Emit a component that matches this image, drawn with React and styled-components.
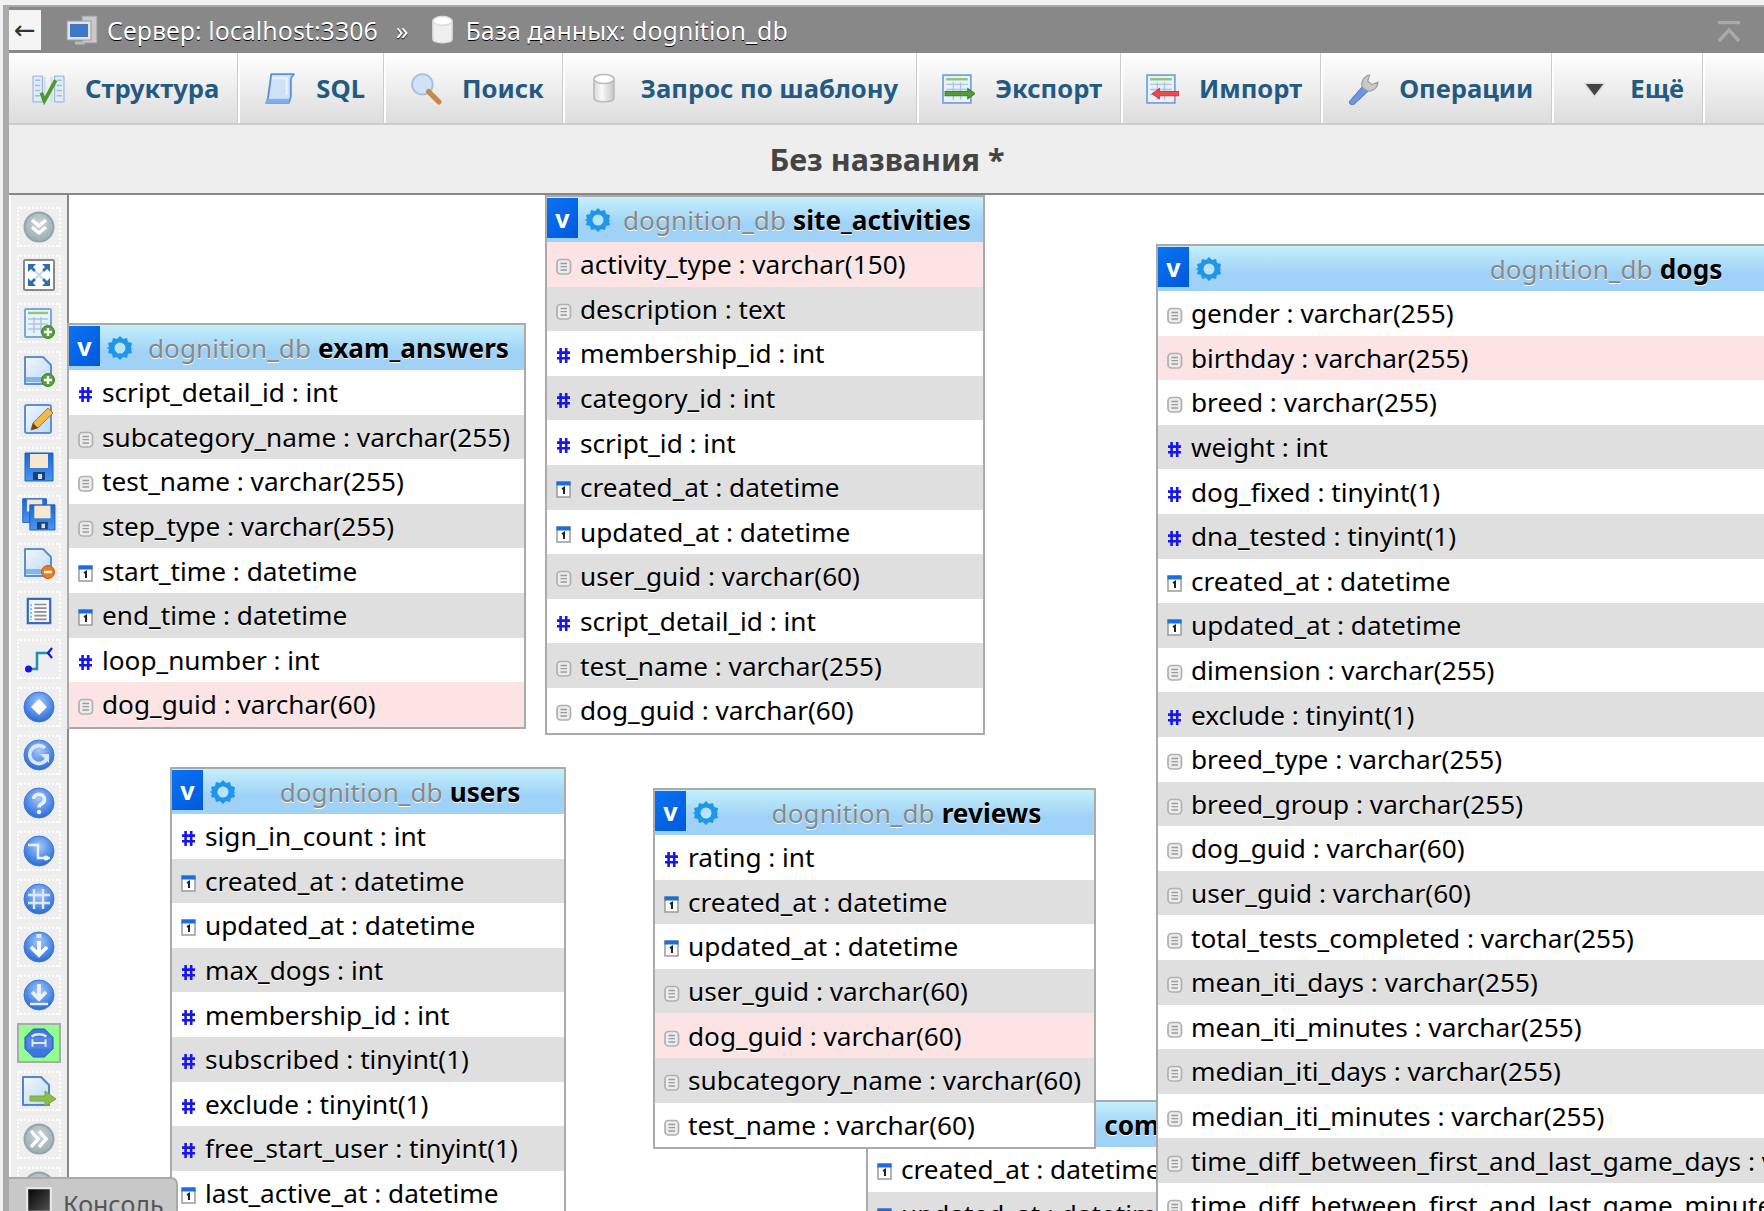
import React from "react";
import styled, { createGlobalStyle } from "styled-components";

const GlobalStyle = createGlobalStyle`
  html, body { margin: 0; padding: 0; height: 100%; overflow: hidden; background: #f1f2f4; }
  body { font-family: "Noto Sans", "Open Sans", sans-serif; }
  #root { height: 100%; }
`;

const Page = styled.div`
  position: relative; width: 1764px; height: 1211px; padding: 5px 0 0 3px;
  box-sizing: border-box; overflow: hidden;
`;
const Frame = styled.div`
  display: flex; flex-direction: column; height: 100%; position: relative;
  border-top: 2px solid #aaa; border-left: 6px solid #aaa; box-sizing: border-box; background: #fff;
`;
const Header = styled.header`
  display: flex; align-items: center; height: 46px; flex: none; background: #888; color: #fff;
  font-size: 25px; text-shadow: 0 1px 0 #000;
`;
const BackButton = styled.div`
  display: flex; align-items: center; justify-content: center; width: 32px; height: 40px;
  margin-right: 25px; background: #f5f5f5; color: #333; font-size: 26px; text-shadow: none; font-family: "DejaVu Sans", sans-serif;
`;
const Crumb = styled.span`
  display: flex; align-items: center; gap: ${p => p.$gap || 9}px; white-space: nowrap; margin-right: ${p => p.$after || 0}px;
`;
const CollapseButton = styled.div`
  margin-left: auto; margin-right: 23px; margin-top: 2px; display: flex;
`;
const TabBar = styled.nav`
  display: flex; height: 72px; flex: none; box-sizing: border-box;
  background: linear-gradient(#fff, #dcdcdc); border-bottom: 2px solid #ccc;
`;
const Tab = styled.a`
  display: flex; align-items: center; gap: 20px; padding: 0 19px 0 23px; color: #235a81;
  font-size: 25.6px; font-weight: 700; border-right: 2px solid; border-color: #fff; box-shadow: inset -1px 0 0 #ccc; white-space: nowrap;
`;
const TabIcon = styled.span`
  display: flex; width: 33px; justify-content: center;
`;
const TitleBand = styled.div`
  display: flex; align-items: center; justify-content: center; flex: none; height: 70px; box-sizing: border-box;
  background: #eee; border-bottom: 2px solid #888; color: #444; font-size: 30.5px; font-weight: 700; padding-left: 1px;
`;
const Workspace = styled.div`
  display: flex; flex: 1; min-height: 0;
`;
const Toolbar = styled.aside`
  display: flex; flex-direction: column; gap: 8px; flex: none; width: 60px; box-sizing: border-box;
  padding: 12px 0 0 8px; background: linear-gradient(90deg, #fff 2px, #eee 2px); border-right: 2px solid #888; overflow: hidden;
`;
const ToolButton = styled.div`
  display: flex; align-items: center; justify-content: center; flex: none; width: 44px; height: 40px; box-sizing: border-box;
  border: 2px ${p => (p.$active ? "solid #aaa" : "dotted #fff")}; background: ${p => (p.$active ? "#90ff90" : "transparent")};
`;
const Canvas = styled.main`
  position: relative; flex: 1; min-width: 0; background: #fff;
`;
const DbTable = styled.section`
  position: absolute; left: ${p => p.$x}px; top: ${p => p.$y}px; width: ${p => p.$w}px; box-sizing: border-box;
  background: #fff; border: 2px solid #aaa; font-size: 26.2px; color: #000;
`;
const TableHead = styled.div`
  display: flex; align-items: center; height: 45px; background: linear-gradient(#c4f0fc 0%, #9fd2f6 60%, #9fd2f6 100%);
`;
const VButton = styled.span`
  display: flex; align-items: center; justify-content: center; flex: none; width: 31px; height: 40px; margin-top: -3px;
  background: linear-gradient(135deg, #0a74f2, #0058dc); color: #fff; font-weight: 700; font-size: 25px; line-height: 1;
`;
const Gear = styled.span`
  display: flex; flex: none; margin-left: 7px;
`;
const TableTitle = styled.div`
  flex: 1; text-align: center; white-space: nowrap; overflow: hidden; text-shadow: 0 1px 0 #fff;
`;
const DbName = styled.span`
  color: #888; margin-right: 7px;
`;
const TableName = styled.span`
  font-weight: 700;
`;
const Row = styled.div`
  display: flex; align-items: center; height: 44.6px; padding-left: 9px; white-space: nowrap; overflow: hidden;
  text-shadow: 0 1px 0 #fff;
  background: ${p => (p.$kind === "pink" ? "#fde4e4" : p.$kind === "gray" ? "#dfdfdf" : "#fff")};
`;
const ColIcon = styled.span`
  display: flex; flex: none; width: 24px; margin-top: 5px;
`;
const Console = styled.div`
  position: absolute; left: 0; top: 1170px; width: 169px; height: 40px; display: flex; align-items: flex-start; gap: 11px;
  box-sizing: border-box; padding: 8px 0 0 17px; background: #c8c8c8; border: solid #aaa; border-width: 2px 2px 0 0;
  border-top-right-radius: 7px; color: #555; font-size: 25px; line-height: 34px;
`;
const Hidden = styled.svg`
  position: absolute; width: 0; height: 0;
`;

const Defs = () => (
  <Hidden aria-hidden="true">
    <defs>
      <radialGradient id="orb" cx="50%" cy="35%" r="65%">
        <stop offset="0" stopColor="#a9c9f7" />
        <stop offset="0.65" stopColor="#4f8ae6" />
        <stop offset="1" stopColor="#2d68cf" />
      </radialGradient>
      <radialGradient id="gorb" cx="50%" cy="40%" r="60%">
        <stop offset="0" stopColor="#cfd8db" />
        <stop offset="1" stopColor="#9aabb0" />
      </radialGradient>
      <linearGradient id="page" x1="0" y1="0" x2="1" y2="1">
        <stop offset="0" stopColor="#f2f7fd" />
        <stop offset="1" stopColor="#bcd8f5" />
      </linearGradient>
      <linearGradient id="cyl" x1="0" y1="0" x2="1" y2="0">
        <stop offset="0" stopColor="#d8d8d8" />
        <stop offset="0.4" stopColor="#fafafa" />
        <stop offset="1" stopColor="#c4c4c4" />
      </linearGradient>
      <linearGradient id="floppy" x1="0" y1="0" x2="0" y2="1">
        <stop offset="0" stopColor="#1c66d6" />
        <stop offset="1" stopColor="#4a95ea" />
      </linearGradient>
      <linearGradient id="blackbox" x1="0" y1="0" x2="1" y2="1">
        <stop offset="0" stopColor="#000" />
        <stop offset="1" stopColor="#555" />
      </linearGradient>
    </defs>
  </Hidden>
);

const Svg = ({ s = 32, h, vb = "0 0 32 32", children }) => (
  <svg width={s} height={h || s} viewBox={vb} fill="none">{children}</svg>
);

/* column type icons */
const HashIcon = () => (
  <Svg s={15} h={17} vb="0 0 15 17">
    <path d="M4.6 1v15M10.2 1v15M1 5.6h13M1 11.2h13" stroke="#1717e8" strokeWidth="2.6" />
  </Svg>
);
const DocIcon = () => (
  <Svg s={16} h={17} vb="0 0 16 17">
    <rect x="1" y="1.5" width="13.5" height="14.5" rx="3.5" fill="#ececec" stroke="#b0b0b0" strokeWidth="1.7" />
    <path d="M4.5 5.5h6.5M4.5 8.7h6.5M4.5 12h6.5" stroke="#9a9a9a" strokeWidth="1.3" />
  </Svg>
);
const CalIcon = () => (
  <Svg s={15} h={17} vb="0 0 15 17">
    <rect x="1" y="1" width="13" height="15" fill="#fff" stroke="#9a9a9a" strokeWidth="1.5" />
    <rect x="0.5" y="0.5" width="14" height="4" fill="#1a6fe0" />
    <path d="M6 8l2-1.2V13" stroke="#222" strokeWidth="2" />
  </Svg>
);

/* toolbar bits */
const Orb = ({ children }) => (
  <Svg s={32}>
    <circle cx="16" cy="16" r="15" fill="url(#orb)" stroke="#3d78da" strokeWidth="1" />
    {children}
  </Svg>
);
const GrayOrb = ({ children }) => (
  <Svg s={32}>
    <circle cx="16" cy="16" r="14.5" fill="url(#gorb)" stroke="#94a6ac" strokeWidth="2" />
    {children}
  </Svg>
);
const PageShape = () => (
  <>
    <path d="M2 2h18l8 8v19H2z" fill="url(#page)" stroke="#5b90d6" strokeWidth="2" strokeLinejoin="round" />
    <path d="M3 22h24v5H3z" fill="#7fb8ee" />
  </>
);
const Plus = () => (
  <>
    <circle cx="25" cy="25" r="6.5" fill="#5aa03a" stroke="#3f7e28" />
    <path d="M25 21v8M21 25h8" stroke="#fff" strokeWidth="2.4" />
  </>
);
const TableShape = ({ w = 26, h = 28 }) => (
  <>
    <rect x="2" y="2" width={w} height={h} rx="1" fill="#e9f1fb" stroke="#7ba7dc" strokeWidth="2" />
    <path d={`M5 6h${w - 6}`} stroke="#8fc873" strokeWidth="2.4" />
    <path d={`M5 12h${w - 6}M5 17h${w - 6}M5 22h${w - 6}M11 10v16M18 10v16`} stroke="#a9c4e6" strokeWidth="1.4" />
  </>
);
const Floppy = ({ x = 0, y = 0, s = 1 }) => (
  <g transform={`translate(${x} ${y}) scale(${s})`}>
    <path d="M2 2h28v28H2z" fill="url(#floppy)" stroke="#1a5ec4" />
    <rect x="7" y="3" width="18" height="14" fill="#f6e7cf" />
    <rect x="10" y="21" width="12" height="8" fill="#17407f" />
    <rect x="15" y="23" width="4" height="5" fill="#cfe0f5" />
  </g>
);

const toolIcons = [
  <GrayOrb><path d="M9 9l7 6 7-6M9 16l7 6 7-6" stroke="#fff" strokeWidth="3.4" strokeLinejoin="round" /></GrayOrb>,
  <Svg s={32}>
    <rect x="1" y="1" width="30" height="30" rx="1.5" fill="#fff" stroke="#888" strokeWidth="2" />
    <path d="M5 5h8l-3 3 3 3-2 2-3-3-3 3zM27 5h-8l3 3-3 3 2 2 3-3 3 3zM5 27h8l-3-3 3-3-2-2-3 3-3-3zM27 27h-8l3-3-3-3 2-2 3 3 3-3z" fill="#2f6cb8" />
    <path d="M12 12l8 8M20 12l-8 8" stroke="#c7d8ee" strokeWidth="2" />
  </Svg>,
  <Svg s={32}><TableShape /><Plus /></Svg>,
  <Svg s={32}><PageShape /><Plus /></Svg>,
  <Svg s={32}>
    <rect x="2" y="2" width="26" height="28" rx="2" fill="url(#page)" stroke="#5b90d6" strokeWidth="2" />
    <path d="M8 27l2-7L25 5l5 5-15 15z" fill="#f2b84b" stroke="#b37a1d" />
    <path d="M8 27l2-7 5 5z" fill="#6b4a20" />
  </Svg>,
  <Svg s={32}><Floppy /></Svg>,
  <Svg s={36} vb="0 0 36 36"><Floppy s={0.85} /><Floppy x={7} y={6} s={0.9} /></Svg>,
  <Svg s={32}>
    <PageShape />
    <circle cx="25" cy="25" r="6.5" fill="#ee7a1c" stroke="#c65a0e" />
    <path d="M21 25h8" stroke="#fff" strokeWidth="2.4" />
  </Svg>,
  <Svg s={28} vb="0 0 28 30">
    <rect x="2" y="2" width="24" height="26" fill="#f5f7fa" stroke="#2f6cc0" strokeWidth="2.4" />
    <path d="M9 8h13M9 12h13M9 16h13M9 20h13M9 24h13" stroke="#8f8f8f" strokeWidth="1.8" />
    <path d="M5.500 8v17" stroke="#6db2ee" strokeWidth="2" strokeDasharray="2 2" />
  </Svg>,
  <Svg s={30} vb="0 0 30 30">
    <path d="M5 25h8V9h12" stroke="#1f8fb5" strokeWidth="2.6" />
    <circle cx="4.500" cy="25" r="3.500" fill="#1717d8" />
    <path d="M28 4l-4 5 4 5" stroke="#1717d8" strokeWidth="2.2" />
  </Svg>,
  <Orb><path d="M16 8l8 8-8 8-8-8z" fill="#fff" /></Orb>,
  <Orb>
    <path d="M22 9a9 9 0 1 0 2.500 9" stroke="#dbe7fb" strokeWidth="3.600" />
    <path d="M17 15h9v9z" fill="#dbe7fb" />
  </Orb>,
  <Orb>
    <path d="M10.500 12a5.500 5 0 1 1 8.500 4.500c-2 1.300-3 2-3 4" stroke="#eaf1fd" strokeWidth="3.600" />
    <circle cx="16" cy="25" r="2.200" fill="#eaf1fd" />
  </Orb>,
  <Orb>
    <path d="M5 10h10v13h12" stroke="#eaf1fd" strokeWidth="2.400" />
    <circle cx="23" cy="23" r="2.500" fill="#eaf1fd" />
  </Orb>,
  <Orb><path d="M11 6v20M20 6v20M5 12h22M5 20h22" stroke="#dfe9fb" strokeWidth="2.400" /></Orb>,
  <Orb>
    <path d="M16 3v4" stroke="#dfe9fb" strokeWidth="5" />
    <path d="M16 10v13M8 16l8 8 8-8" stroke="#fff" strokeWidth="3.800" />
  </Orb>,
  <Orb>
    <path d="M16 5v14M9 13l7 7 7-7" stroke="#eaf1fd" strokeWidth="3.800" />
    <path d="M7 25h18" stroke="#eaf1fd" strokeWidth="2.400" />
  </Orb>,
  <Svg s={30}>
    <path d="M10 1h12l9 9v12l-9 9H10l-9-9V10z" fill="#3f76dd" stroke="#2a5cc0" />
    <path d="M8 9a12 9 0 0 1 16 0" stroke="#dfe9fb" strokeWidth="2.500" />
    <path d="M9 12v8M23 12v8M10 16h12" stroke="#dfe9fb" strokeWidth="2" />
    <path d="M3 10h26v12H3" fill="#fff" opacity="0.12" />
  </Svg>,
  <Svg s={36} vb="0 0 36 32">
    <path d="M2 2h18l8 8v20H2z" fill="url(#page)" stroke="#4f86cf" strokeWidth="2" strokeLinejoin="round" />
    <path d="M9 21h15v-5l11 8-11 7v-5H9z" fill="#8dbb4c" stroke="#7aa63d" />
  </Svg>,
  <GrayOrb><path d="M8 8l7 8-7 8M16 8l7 8-7 8" stroke="#fff" strokeWidth="3.400" /></GrayOrb>,
  <GrayOrb />,
];

const Cylinder = ({ w = 24, h = 31, fill = "url(#cyl)", stroke = "#bbb" }) => (
  <svg width={w} height={h} viewBox="0 0 24 31" fill="none">
    <path d="M2 6v19c0 5 20 5 20 0V6z" fill={fill} stroke={stroke} strokeWidth="1.600" />
    <ellipse cx="12" cy="6" rx="10" ry="4.500" fill="#fff" stroke={stroke} strokeWidth="1.600" />
  </svg>
);

const tabs = [
  ["Структура", <Svg s={33}>
    <rect x="1" y="4" width="9" height="25" fill="#e2ecf8" stroke="#8fb2de" />
    <rect x="22" y="4" width="9" height="25" fill="#e2ecf8" stroke="#8fb2de" />
    <path d="M3 8h5M3 13h5M3 18h5M3 23h5M24 8h5M24 13h5M24 18h5M24 23h5" stroke="#9dbce3" strokeWidth="1.500" />
    <path d="M12 5v24M19 5v24" stroke="#cfdcec" strokeWidth="2" />
    <path d="M9 20l3 8L23 8" stroke="#4f9a2f" strokeWidth="3.600" />
  </Svg>],
  ["SQL", <Svg s={33}>
    <path d="M8 2h22c-2 2-3 4-3 6v16l-2 6H3c2-2 2-3 2-6z" fill="#cfe1f7" stroke="#5d8fd6" strokeWidth="1.800" strokeLinejoin="round" />
    <path d="M3 26h22v4H3z" fill="#7faee9" />
    <path d="M9 6h14v16" stroke="#eaf2fc" strokeWidth="2" />
  </Svg>],
  ["Поиск", <Svg s={33}>
    <circle cx="13" cy="12" r="10" fill="#cfe2f8" stroke="#a8bfd9" strokeWidth="1.800" />
    <path d="M19 19l10 10" stroke="#c48a4b" strokeWidth="5" strokeLinecap="round" />
  </Svg>],
  ["Запрос по шаблону", <Cylinder />],
  ["Экспорт", <Svg s={33}>
    <rect x="1" y="3" width="27" height="27" fill="#e9f1fb" stroke="#7ba7dc" strokeWidth="1.800" />
    <path d="M4 7h21" stroke="#8fc873" strokeWidth="2.400" />
    <path d="M4 12h21M4 17h21M4 22h21M11 10v17M18 10v17" stroke="#a9c4e6" strokeWidth="1.300" />
    <path d="M3 19h22v-3l7 5-7 5v-3H3z" fill="#4f9e3a" stroke="#3a7f29" />
  </Svg>],
  ["Импорт", <Svg s={33}>
    <rect x="1" y="3" width="27" height="27" fill="#e9f1fb" stroke="#7ba7dc" strokeWidth="1.800" />
    <path d="M4 7h21" stroke="#8fc873" strokeWidth="2.400" />
    <path d="M4 12h21M4 17h21M4 22h21M11 10v17M18 10v17" stroke="#a9c4e6" strokeWidth="1.300" />
    <path d="M32 19H13v-3l-7 5 7 5v-3h19z" fill="#f04a4a" stroke="#d93636" />
  </Svg>],
  ["Операции", <Svg s={33}>
    <path d="M4 28L17 13l5 5L8 31c-3 2-6-1-4-3z" fill="#6d97dc" stroke="#4f7cc6" />
    <path d="M16 15c-2-5 1-11 7-12l-2 6 4 3 6-2c0 6-7 10-11 8z" fill="#c9c9c9" stroke="#9a9a9a" />
  </Svg>],
  ["Ещё", <Svg s={33}>
    <path d="M7 11h20l-10 13z" fill="#444" stroke="#ddd" strokeWidth="1.500" strokeLinejoin="round" />
  </Svg>],
];

const typeIcon = t => (/int/.test(t) ? <HashIcon /> : /datetime/.test(t) ? <CalIcon /> : <DocIcon />);

const dbTables = [
  { name: "complete_tests", x: 797, y: 905, w: 440, cols: ["created_at : datetime", "updated_at : datetime", "user_guid : varchar(60)"], pink: -1 },
  { name: "exam_answers", x: -2, y: 128, w: 459, pink: 7, cols: ["script_detail_id : int", "subcategory_name : varchar(255)", "test_name : varchar(255)", "step_type : varchar(255)", "start_time : datetime", "end_time : datetime", "loop_number : int", "dog_guid : varchar(60)"] },
  { name: "site_activities", x: 476, y: 0, w: 440, pink: 0, cols: ["activity_type : varchar(150)", "description : text", "membership_id : int", "category_id : int", "script_id : int", "created_at : datetime", "updated_at : datetime", "user_guid : varchar(60)", "script_detail_id : int", "test_name : varchar(255)", "dog_guid : varchar(60)"] },
  { name: "users", x: 101, y: 572, w: 396, pink: -1, cols: ["sign_in_count : int", "created_at : datetime", "updated_at : datetime", "max_dogs : int", "membership_id : int", "subscribed : tinyint(1)", "exclude : tinyint(1)", "free_start_user : tinyint(1)", "last_active_at : datetime"] },
  { name: "reviews", x: 584, y: 593, w: 443, pink: 4, cols: ["rating : int", "created_at : datetime", "updated_at : datetime", "user_guid : varchar(60)", "dog_guid : varchar(60)", "subcategory_name : varchar(60)", "test_name : varchar(60)"] },
  { name: "dogs", x: 1087, y: 49, w: 836, pink: 1, cols: ["gender : varchar(255)", "birthday : varchar(255)", "breed : varchar(255)", "weight : int", "dog_fixed : tinyint(1)", "dna_tested : tinyint(1)", "created_at : datetime", "updated_at : datetime", "dimension : varchar(255)", "exclude : tinyint(1)", "breed_type : varchar(255)", "breed_group : varchar(255)", "dog_guid : varchar(60)", "user_guid : varchar(60)", "total_tests_completed : varchar(255)", "mean_iti_days : varchar(255)", "mean_iti_minutes : varchar(255)", "median_iti_days : varchar(255)", "median_iti_minutes : varchar(255)", "time_diff_between_first_and_last_game_days : varchar(255)", "time_diff_between_first_and_last_game_minutes : varchar(255)"] },
];

const GearIcon = () => (
  <svg width="26" height="26" viewBox="0 0 26 26" fill="none">
    <path d="M13 1l3 3 4-1 1 4 4 1-1 5 2 0-2 1 1 4-4 1-1 4-4-1-3 3-3-3-4 1-1-4-4-1 1-4-3-1 3-1-1-4 4-1 1-4 4 1z" fill="#1f96e8" />
    <circle cx="13" cy="13" r="5.500" fill="#b9e2fb" />
  </svg>
);

export default function App() {
  return (
    <Page>
      <GlobalStyle />
      <Defs />
      <Frame>
        <Header>
          <BackButton>←</BackButton>
          <Crumb $after={18}>
            <svg width="32" height="31" viewBox="0 0 32 31" fill="none">
              <rect x="16" y="1" width="15" height="27" fill="#c9c9c9" stroke="#999" />
              <rect x="1" y="6" width="24" height="19" fill="#e4e4e4" stroke="#999" />
              <rect x="4" y="9" width="18" height="13" fill="#3f78c8" />
              <path d="M9 28h10" stroke="#bbb" strokeWidth="3" />
            </svg>
            <span>Сервер: localhost:3306</span>
          </Crumb>
          <Crumb $after={22}>»</Crumb>
          <Crumb $gap={12}>
            <Cylinder w={23} h={30} fill="#efefef" stroke="#ddd" />
            <span>База данных: dognition_db</span>
          </Crumb>
          <CollapseButton>
            <svg width="24" height="21" viewBox="0 0 24 21" fill="none">
              <path d="M1 1.500h22" stroke="#aaa" strokeWidth="3.500" />
              <path d="M2 20l10-11 10 11" stroke="#aaa" strokeWidth="3.500" />
            </svg>
          </CollapseButton>
        </Header>
        <TabBar>
          {tabs.map(([label, icon]) => (
            <Tab key={label}>
              <TabIcon>{icon}</TabIcon>
              {label}
            </Tab>
          ))}
        </TabBar>
        <TitleBand>Без названия *</TitleBand>
        <Workspace>
          <Toolbar>
            {toolIcons.map((icon, i) => (
              <ToolButton key={i} $active={i === 17}>{icon}</ToolButton>
            ))}
          </Toolbar>
          <Canvas>
            {dbTables.map(t => (
              <DbTable key={t.name} $x={t.x} $y={t.y} $w={t.w}>
                <TableHead>
                  <VButton>v</VButton>
                  <Gear><GearIcon /></Gear>
                  <TableTitle>
                    <DbName>dognition_db</DbName>
                    <TableName>{t.name}</TableName>
                  </TableTitle>
                </TableHead>
                {t.cols.map((c, i) => (
                  <Row key={c} $kind={i === t.pink ? "pink" : i % 2 ? "gray" : "white"}>
                    <ColIcon>{typeIcon(c)}</ColIcon>
                    {c}
                  </Row>
                ))}
              </DbTable>
            ))}
          </Canvas>
        </Workspace>
        <Console>
          <svg width="26" height="26" viewBox="0 0 26 26" fill="none">
            <rect x="1" y="1" width="24" height="24" fill="url(#blackbox)" stroke="#e6e6e6" strokeWidth="2.500" />
          </svg>
          Консоль
        </Console>
      </Frame>
    </Page>
  );
}
